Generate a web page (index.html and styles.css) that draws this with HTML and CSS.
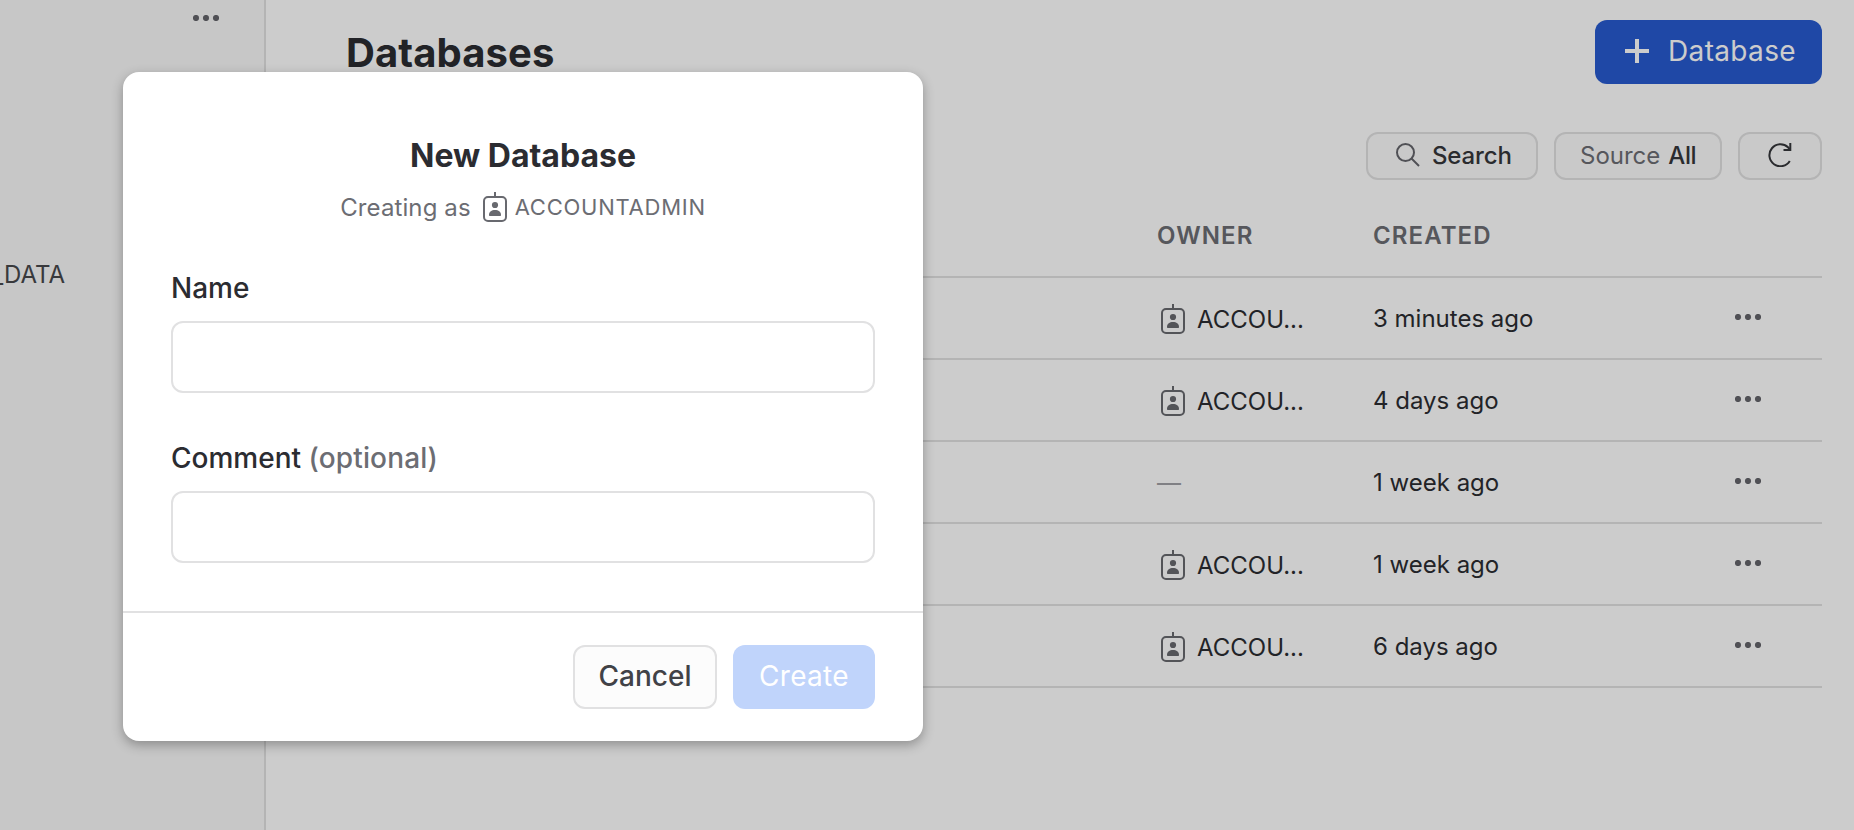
FILE: index.html
```html
<!DOCTYPE html>
<html lang="en">
<head>
<meta charset="utf-8">
<title>Databases</title>
<link rel="stylesheet" href="styles.css">
</head>
<body>
<svg class="sprite" aria-hidden="true">
  <symbol id="badge" viewBox="0 0 24 30">
    <path d="M12 0v5" stroke="currentColor" stroke-width="2" fill="none"/>
    <rect x="1" y="5" width="22" height="24" rx="4" stroke="currentColor" stroke-width="2" fill="none"/>
    <circle cx="12" cy="13" r="3.1" fill="currentColor"/>
    <path d="M6 23c0-3.200 2.600-5 6-5s6 1.800 6 5c0 .7-.3 1-1 1H7c-.7 0-1-.3-1-1z" fill="currentColor"/>
  </symbol>
  <symbol id="dots" viewBox="0 0 26 6">
    <circle cx="3" cy="3" r="3.100" fill="currentColor"/><circle cx="13" cy="3" r="3.100" fill="currentColor"/><circle cx="23" cy="3" r="3.100" fill="currentColor"/>
  </symbol>
</svg>
<div class="app">
  <aside class="sidebar">
    <svg class="dots side-dots"><use href="#dots"/></svg>
    <div class="tree-item"><span>_DATA</span></div>
  </aside>
  <main class="main">
    <header class="page-head">
      <h1 class="page-title">Databases</h1>
      <button class="btn-primary"><svg class="plus" viewBox="0 0 24 24"><path d="M12 0v24M0 12h24" stroke="currentColor" stroke-width="4"/></svg><span class="btn-primary-label">Database</span></button>
    </header>
    <div class="toolbar">
      <button class="tool tool-search"><svg class="icon-search" viewBox="0 0 24 24" fill="none" stroke="currentColor" stroke-width="2"><circle cx="9.500" cy="9.500" r="8.500"/><path d="M15.500 15.500l7.500 7.500"/></svg><b class="search-label">Search</b></button>
      <button class="tool tool-source"><span class="source-label">Source</span><b class="all-label">All</b></button>
      <button class="tool tool-refresh" aria-label="Refresh"><svg class="icon-refresh" viewBox="0 0 24 24" fill="none" stroke="currentColor" stroke-width="2"><path d="M21.800 18A11 11 0 1 1 20 4.300L22 6.500"/><path d="M22.300 0v7H15.500"/></svg></button>
    </div>
    <section class="table">
      <div class="row row-head"><span class="th th-owner">OWNER</span><span class="th th-created">CREATED</span></div>
      <div class="row"><span class="owner"><svg class="badge"><use href="#badge"/></svg><span class="role">ACCOU...</span></span><span class="created">3 minutes ago</span><svg class="dots"><use href="#dots"/></svg></div>
      <div class="row"><span class="owner"><svg class="badge"><use href="#badge"/></svg><span class="role">ACCOU...</span></span><span class="created">4 days ago</span><svg class="dots"><use href="#dots"/></svg></div>
      <div class="row"><span class="none">—</span><span class="created">1 week ago</span><svg class="dots"><use href="#dots"/></svg></div>
      <div class="row"><span class="owner"><svg class="badge"><use href="#badge"/></svg><span class="role">ACCOU...</span></span><span class="created">1 week ago</span><svg class="dots"><use href="#dots"/></svg></div>
      <div class="row"><span class="owner"><svg class="badge"><use href="#badge"/></svg><span class="role">ACCOU...</span></span><span class="created">6 days ago</span><svg class="dots"><use href="#dots"/></svg></div>
    </section>
  </main>
</div>
<div class="overlay">
  <form class="modal">
    <div class="modal-body">
      <h2 class="modal-title">New Database</h2>
      <div class="modal-sub"><span class="creating">Creating as</span><svg class="badge"><use href="#badge"/></svg><span class="modal-role">ACCOUNTADMIN</span></div>
      <label class="label" for="name">Name</label>
      <input class="input" id="name" type="text">
      <label class="label label-second" for="comment">Comment <span class="optional">(optional)</span></label>
      <input class="input" id="comment" type="text">
    </div>
    <footer class="modal-foot">
      <button type="button" class="btn btn-cancel">Cancel</button>
      <button type="button" class="btn btn-create">Create</button>
    </footer>
  </form>
</div>
</body>
</html>
```
FILE: styles.css
```css
* { box-sizing: border-box; }
body { margin: 0; height: 830px; overflow: hidden; background: #fff; font-family: Inter, "Liberation Sans", sans-serif; font-size: 24px; color: #2b2c31; }
button, input { font: inherit; margin: 0; padding: 0; color: inherit; }
h1, h2 { margin: 0; }
b { font-weight: 500; }
svg { display: block; flex: none; }
.sprite { position: absolute; width: 0; height: 0; }

.app { display: flex; height: 830px; }
.sidebar { width: 266px; flex: none; background: #f9f9f9; border-right: 2px solid #e1e1e2; display: flex; flex-direction: column; }
.dots { width: 26px; height: 6px; color: #64656b; overflow: visible; }
.side-dots { margin: 15px 0 0 193px; }
.tree-item { width: 65px; margin-top: 239px; line-height: 30px; display: flex; justify-content: flex-end; color: #47484c; }

.main { flex: 1; padding: 20px 32px 0 80px; }
.page-head { display: flex; justify-content: space-between; height: 64px; }
.page-title { font-size: 40px; line-height: 66px; font-weight: 700; letter-spacing: 0.1px; }
.btn-primary { width: 227px; height: 64px; border: 0; border-radius: 12px; background: #275ad0; color: #fff; font-size: 28px; display: flex; align-items: center; padding: 0 0 2px 30px; gap: 19px; }
.plus { width: 24px; height: 24px; }
.btn-primary-label { letter-spacing: 0.35px; }
.toolbar { display: flex; justify-content: flex-end; gap: 16px; margin-top: 48px; }
.tool { height: 48px; border: 2px solid #e1e1e2; border-radius: 12px; background: #fcfcfc; display: flex; align-items: center; padding-bottom: 2px; color: #35363a; }
.tool-search { width: 172px; padding-left: 28px; gap: 12px; }
.tool-source { width: 168px; padding-left: 24px; gap: 8px; }
.source-label { color: #6c6d73; }
.all-label { letter-spacing: -0.4px; }
.search-label { letter-spacing: -0.15px; }
.tool-refresh { width: 84px; justify-content: center; }
.icon-search { width: 24px; height: 24px; color: #64656b; }
.icon-refresh { width: 24px; height: 24px; }

.row { display: grid; grid-template-columns: 811px 216px 362px 26px; height: 82px; border-bottom: 2px solid #e1e1e2; align-items: center; line-height: 30px; }
.row > :first-child { grid-column: 2; }
.row > .dots { margin-bottom: 2px; }
.row-head { height: 98px; padding-top: 15px; font-weight: 600; color: #6c6d73; }
.th { letter-spacing: 1.1px; }
.owner { display: flex; align-items: center; padding: 2px 0 0 4px; gap: 12px; }
.badge { width: 24px; height: 30px; color: #68696f; }
.role { padding-top: 2px; }
.created { padding-top: 2px; }
.none { padding-top: 2px; color: #a0a1a5; }

.overlay { position: absolute; inset: 0; background: rgba(0, 0, 0, 0.2); padding: 72px 0 0 123px; }
.modal { width: 800px; height: 669px; border-radius: 16px; background: #fff; box-shadow: 0 4px 12px rgba(0, 0, 0, 0.3); }
.modal-body { height: 539px; padding: 64px 48px 0; }
.modal-title { font-size: 32px; line-height: 40px; font-weight: 700; text-align: center; }
.modal-sub { display: flex; justify-content: center; align-items: center; height: 32px; margin-top: 15px; color: #6c6d73; }
.modal-sub .badge { margin: 0 8px 0 12px; }
.creating { padding-top: 1px; letter-spacing: 0.1px; }
.modal-role { font-size: 22px; letter-spacing: 0.75px; }
.label { display: block; font-size: 28px; line-height: 34px; font-weight: 500; margin-top: 48px; }
.label-second { margin-top: 48px; }
.optional { color: #6c6d73; letter-spacing: 0.15px; }
.input { display: block; width: 704px; height: 72px; margin-top: 16px; border: 2px solid #e1e1e2; border-radius: 12px; background: #fff; }
.modal-foot { height: 130px; border-top: 2px solid #e1e1e2; padding: 32px 48px 0; display: flex; justify-content: flex-end; gap: 16px; }
.btn { height: 64px; border-radius: 12px; font-size: 28px; padding-bottom: 2px; }
.btn-cancel { width: 144px; border: 2px solid #e1e1e2; background: #fcfcfc; font-weight: 500; color: #414247; }
.btn-create { width: 142px; border: 0; background: #c0d4fb; color: #fff; letter-spacing: 0.3px; }
```
